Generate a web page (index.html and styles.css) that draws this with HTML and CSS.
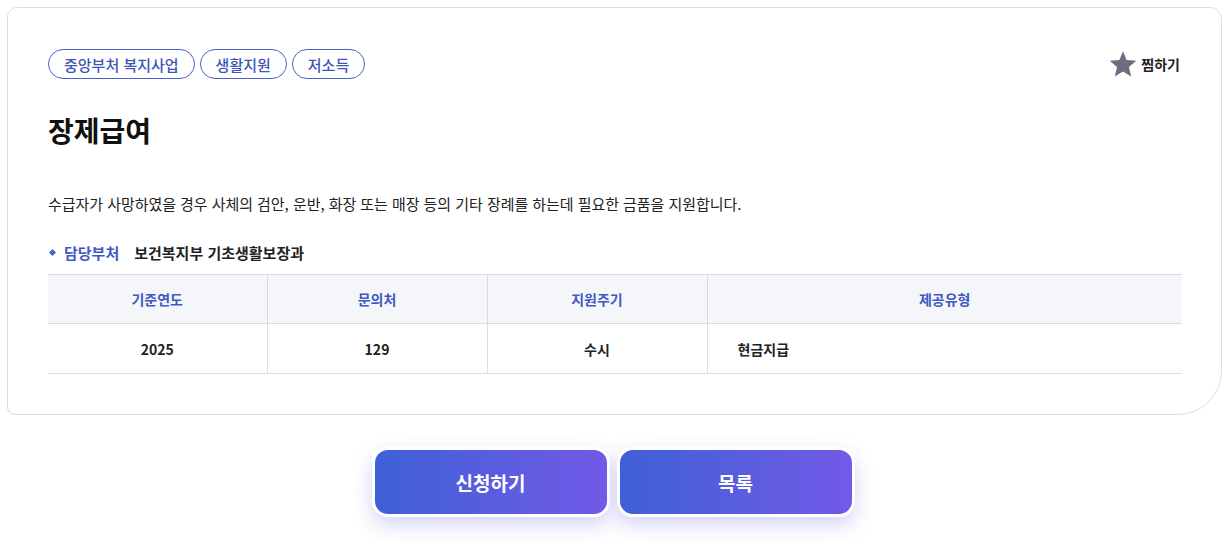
FILE: index.html
```html
<!DOCTYPE html>
<html lang="ko">
<head>
<meta charset="utf-8">
<link rel="stylesheet" href="styles.css">
</head>
<body>
<div class="page">
  <section class="card">
    <div class="top-row">
      <div class="tags">
        <span class="tag">중앙부처 복지사업</span>
        <span class="tag">생활지원</span>
        <span class="tag">저소득</span>
      </div>
      <button class="fav" type="button">
        <svg class="star" width="28" height="28" viewBox="0 0 24 24"><polygon points="12,1 15.1,8.6 23.4,9.3 17.1,14.6 19,22.8 12,18.4 5,22.8 6.9,14.6 0.6,9.3 8.9,8.6" fill="#6b6d80"/></svg>
        <span>찜하기</span>
      </button>
    </div>
    <h1 class="title">장제급여</h1>
    <p class="desc">수급자가 사망하였을 경우 사체의 검안, 운반, 화장 또는 매장 등의 기타 장례를 하는데 필요한 금품을 지원합니다.</p>
    <div class="owner">
      <span class="bullet"></span>
      <span class="owner-label">담당부처</span>
      <span class="owner-value">보건복지부 기초생활보장과</span>
    </div>
    <table class="info">
      <thead>
        <tr>
          <th class="c1">기준연도</th>
          <th class="c2">문의처</th>
          <th class="c3">지원주기</th>
          <th class="c4">제공유형</th>
        </tr>
      </thead>
      <tbody>
        <tr>
          <td>2025</td>
          <td>129</td>
          <td>수시</td>
          <td class="left">현금지급</td>
        </tr>
      </tbody>
    </table>
  </section>
  <div class="actions">
    <button class="btn" type="button">신청하기</button>
    <button class="btn" type="button">목록</button>
  </div>
</div>
</body>
</html>
```

FILE: styles.css
```css
* { box-sizing: border-box; }
html, body { margin: 0; padding: 0; background: #fff; }
body {
  font-family: "Noto Sans CJK KR", "Noto Sans", sans-serif;
  color: #222;
}
.page {
  padding: 7px 10px 40px 7px;
}
.card {
  border: 1px solid #dddde0;
  border-radius: 10px 12px 44px 8px;
  padding: 41px 39px 40px 40px;
  background: #fff;
}
.top-row {
  display: flex;
  justify-content: space-between;
  align-items: center;
  height: 30px;
}
.tags {
  display: flex;
  gap: 5px;
}
.tag {
  display: inline-flex;
  align-items: center;
  height: 30px;
  padding: 0 15px;
  border: 1px solid #4a62c4;
  border-radius: 15px;
  color: #3d55b5;
  font-size: 15px;
  font-weight: 500;
  line-height: 1;
}
.fav {
  display: flex;
  align-items: center;
  gap: 4px;
  border: 0;
  background: none;
  padding: 0;
  margin-right: 2px;
  font-family: inherit;
  font-size: 14px;
  font-weight: 700;
  color: #222;
}
.title {
  margin: 31px 0 0;
  font-size: 28px;
  line-height: 40px;
  font-weight: 700;
  color: #111;
}
.desc {
  margin: 43px 0 0;
  font-size: 15px;
  line-height: 22px;
  color: #222;
  letter-spacing: -0.05px;
}
.owner {
  display: flex;
  align-items: center;
  margin-top: 26px;
  height: 22px;
  font-size: 15px;
  font-weight: 700;
}
.bullet {
  width: 5px;
  height: 5px;
  background: #4a62c9;
  transform: rotate(45deg);
  margin: 0 9px 0 2px;
}
.owner-label {
  color: #3f59c4;
  margin-right: 15px;
}
.owner-value {
  color: #222;
}
.info {
  width: 100%;
  margin-top: 11px;
  border-collapse: collapse;
  table-layout: fixed;
  font-size: 14px;
}
.info th, .info td {
  text-align: center;
  border-top: 1px solid #dcdce0;
  border-bottom: 1px solid #dcdce0;
  border-left: 1px solid #dcdce0;
}
.info th:first-child, .info td:first-child { border-left: 0; }
.info th {
  height: 49px;
  background: #f5f6fa;
  color: #4059c3;
  font-weight: 600;
}
.info td {
  height: 50px;
  color: #222;
  font-weight: 700;
}
.info td.left {
  text-align: left;
  padding-left: 30px;
}
.c1 { width: 219px; }
.c2 { width: 220px; }
.c3 { width: 220px; }
.actions {
  display: flex;
  justify-content: center;
  gap: 7px;
  margin-top: 32px;
  margin-left: 7px;
  margin-right: 10px;
}
.btn {
  width: 238px;
  height: 70px;
  border: 3px solid #fff;
  border-radius: 16px;
  background: linear-gradient(90deg, #3e60d6 0%, #725ae8 100%);
  box-shadow: 0 8px 20px rgba(100, 100, 220, 0.28);
  color: #fff;
  font-family: inherit;
  font-size: 19px;
  font-weight: 700;
}
```
